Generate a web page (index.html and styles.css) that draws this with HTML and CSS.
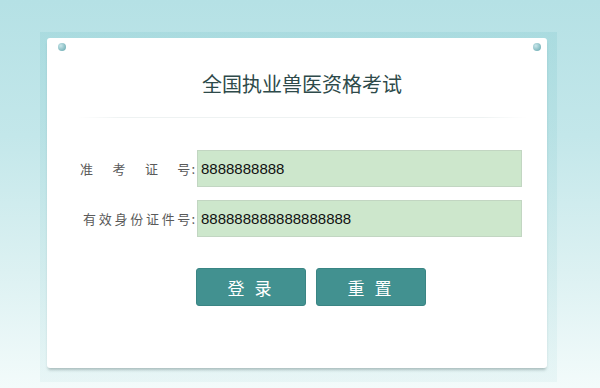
FILE: index.html
```html
<!DOCTYPE html>
<html lang="zh-CN">
<head>
<meta charset="utf-8">
<title>全国执业兽医资格考试</title>
<link rel="stylesheet" href="styles.css">
</head>
<body>
<div class="page">
  <div class="frame">
    <div class="card">
      <span class="pin pin-left"></span>
      <span class="pin pin-right"></span>
      <h1 class="title">全国执业兽医资格考试</h1>
      <div class="sep"></div>
      <form class="form">
        <div class="row">
          <label class="label label-a"><span class="label-text">准考证号</span><span class="colon">:</span></label>
          <input class="field" type="text" value="8888888888">
        </div>
        <div class="row">
          <label class="label label-b"><span class="label-text">有效身份证件号</span><span class="colon">:</span></label>
          <input class="field" type="text" value="888888888888888888">
        </div>
        <div class="actions">
          <button class="btn" type="button">登 录</button>
          <button class="btn" type="button">重 置</button>
        </div>
      </form>
    </div>
  </div>
</div>
</body>
</html>
```

FILE: styles.css
```css
html, body {
  margin: 0;
  padding: 0;
}
body {
  width: 600px;
  height: 388px;
  overflow: hidden;
  background: linear-gradient(to bottom, #b5e1e5 0%, #c3e7ea 35%, #dcf1f2 70%, #f3fbfb 100%);
  font-family: "Noto Sans CJK SC", "Liberation Sans", sans-serif;
}
.page {
  padding: 32px 0 0 40px;
}
.frame {
  width: 517px;
  height: 350px;
  box-sizing: border-box;
  padding: 6px 10px 14px 7px;
  background: linear-gradient(to bottom, rgba(120, 195, 200, 0.22), rgba(200, 230, 232, 0.25));
}
.card {
  position: relative;
  height: 330px;
  background: #ffffff;
  border-radius: 3px;
  box-shadow: 0 3px 3px -1px rgba(60, 90, 90, 0.35);
}
.pin {
  position: absolute;
  top: 5px;
  width: 8px;
  height: 8px;
  border-radius: 50%;
  background: radial-gradient(circle at 35% 35%, #c9e6ea, #7fb8be 70%);
}
.pin-left { left: 11px; }
.pin-right { right: 6px; }
.title {
  margin: 0;
  padding: 33px 0 0 10px;
  font-size: 20px;
  line-height: 26px;
  font-weight: normal;
  color: #2e4a4a;
  text-align: center;
}
.sep {
  margin: 20px 20px 0 30px;
  height: 1px;
  background: linear-gradient(to right, rgba(230,236,236,0), #eef2f2 10%, #eef2f2 90%, rgba(230,236,236,0));
}
.form {
  padding-top: 32px;
}
.row {
  display: flex;
  align-items: center;
  margin-bottom: 13px;
}
.label {
  box-sizing: border-box;
  display: flex;
  width: 150px;
  padding-right: 2px;
  font-size: 13px;
  color: #5a5a5a;
}
.label-text {
  flex: 1;
  text-align: justify;
  text-align-last: justify;
}
.colon {
  padding-left: 1px;
}
.label-a { padding-left: 33px; }
.label-b { padding-left: 36px; }
.label-b .label-text { letter-spacing: 0; }
.field {
  box-sizing: border-box;
  width: 325px;
  height: 37px;
  margin: 0;
  padding: 0 3px;
  border: 1px solid #c2d6c2;
  background: #cde7cc;
  font-family: "Liberation Sans", Arial, sans-serif;
  font-size: 15px;
  color: #111;
  outline: none;
}
.actions {
  display: flex;
  gap: 10px;
  padding: 18px 0 0 149px;
}
.btn {
  width: 110px;
  height: 38px;
  margin: 0;
  border: 1px solid #3a8584;
  border-radius: 3px;
  background: #429190;
  color: #fff;
  font-family: "Noto Sans CJK SC", sans-serif;
  font-size: 17px;
  letter-spacing: 3px;
  padding: 0;
}
```
